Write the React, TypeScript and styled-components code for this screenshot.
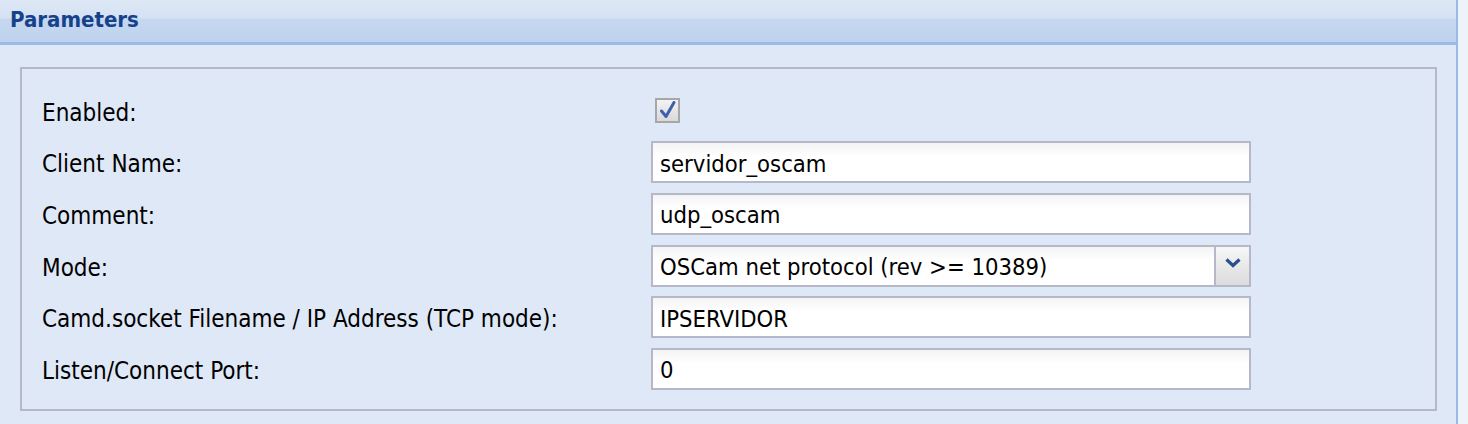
import React from "react";
import styled, { createGlobalStyle } from "styled-components";

const GlobalStyle = createGlobalStyle`
  html, body {
    margin: 0;
    padding: 0;
    background: #eef3fa;
  }
  body {
    font-family: "DejaVu Sans Condensed", "DejaVu Sans", sans-serif;
    font-stretch: condensed;
  }
`;

const Panel = styled.div`
  width: 1458px;
  height: 424px;
  box-sizing: border-box;
  border-right: 2px solid #99bbe8;
  background: #dfe8f6;
  overflow: hidden;
`;

const PanelHeader = styled.div`
  height: 45px;
  box-sizing: border-box;
  padding: 7px 10px 0;
  border-bottom: 3px solid #99bbe8;
  background: linear-gradient(
    to bottom,
    #dde7f5 0%,
    #d5e2f3 42%,
    #c6d8f0 46%,
    #bed2ee 100%
  );
`;

const PanelTitle = styled.span`
  font-size: 22px;
  font-weight: bold;
  color: #15428b;
`;

const PanelBody = styled.div`
  padding: 22px 19px 12px 20px;
`;

const FieldSet = styled.div`
  border: 2px solid #b5b8c8;
  padding: 16px 0 14px 20px;
  display: grid;
  grid-template-columns: 609px 600px;
  grid-auto-rows: 51.6px;
  align-items: center;
`;

const Label = styled.div`
  font-size: 24px;
  color: #000;
  padding-top: 4px;
`;

const TextBox = styled.div`
  height: 42px;
  box-sizing: border-box;
  border: 2px solid #b5b8c8;
  background: linear-gradient(to bottom, #f4f4f4 0%, #ffffff 35%, #ffffff 100%);
  display: flex;
  align-items: center;
  font-size: 23.6px;
  color: #000;
  padding: 3px 0 0 7px;
`;

const SelectBox = styled(TextBox)`
  padding-right: 0;
  justify-content: space-between;
`;

const TriggerButton = styled.div`
  width: 35px;
  height: calc(100% + 3px);
  margin-top: -3px;
  box-sizing: border-box;
  border-left: 2px solid #b5b8c8;
  background: linear-gradient(to bottom, #f7f7f7 0%, #e6e6e6 60%, #dcdcdc 100%);
  display: flex;
  align-items: center;
  justify-content: center;
  padding-bottom: 5px;
`;

const CheckBox = styled.div`
  width: 25px;
  height: 25px;
  box-sizing: border-box;
  margin-left: 4px;
  border: 2px solid #a7a7a7;
  background: linear-gradient(to bottom, #f3f3f3, #d9d9d9);
  display: flex;
  align-items: center;
  justify-content: center;
`;

const rows: { label: string; value: string; kind?: "check" | "select" }[] = [
  { label: "Enabled:", value: "", kind: "check" },
  { label: "Client Name:", value: "servidor_oscam" },
  { label: "Comment:", value: "udp_oscam" },
  { label: "Mode:", value: "OSCam net protocol (rev >= 10389)", kind: "select" },
  { label: "Camd.socket Filename / IP Address (TCP mode):", value: "IPSERVIDOR" },
  { label: "Listen/Connect Port:", value: "0" },
];

export default function App() {
  return (
    <>
      <GlobalStyle />
      <Panel>
        <PanelHeader>
          <PanelTitle>Parameters</PanelTitle>
        </PanelHeader>
        <PanelBody>
          <FieldSet>
            {rows.map((r) => (
              <React.Fragment key={r.label}>
                <Label>{r.label}</Label>
                {r.kind === "check" ? (
                  <CheckBox>
                    <svg width="19" height="19" viewBox="0 0 19 19">
                      <path
                        d="M3.5 10 L8 15.5 L16 1.5"
                        fill="none"
                        stroke="#3f5fae"
                        strokeWidth="3"
                        strokeLinecap="round"
                        strokeLinejoin="round"
                      />
                    </svg>
                  </CheckBox>
                ) : r.kind === "select" ? (
                  <SelectBox>
                    <span>{r.value}</span>
                    <TriggerButton>
                      <svg width="16" height="10" viewBox="0 0 16 10">
                        <path
                          d="M1.5 1.5 L8 7.5 L14.5 1.5"
                          fill="none"
                          stroke="#284f8e"
                          strokeWidth="3.2"
                          strokeLinejoin="miter"
                        />
                      </svg>
                    </TriggerButton>
                  </SelectBox>
                ) : (
                  <TextBox>{r.value}</TextBox>
                )}
              </React.Fragment>
            ))}
          </FieldSet>
        </PanelBody>
      </Panel>
    </>
  );
}
